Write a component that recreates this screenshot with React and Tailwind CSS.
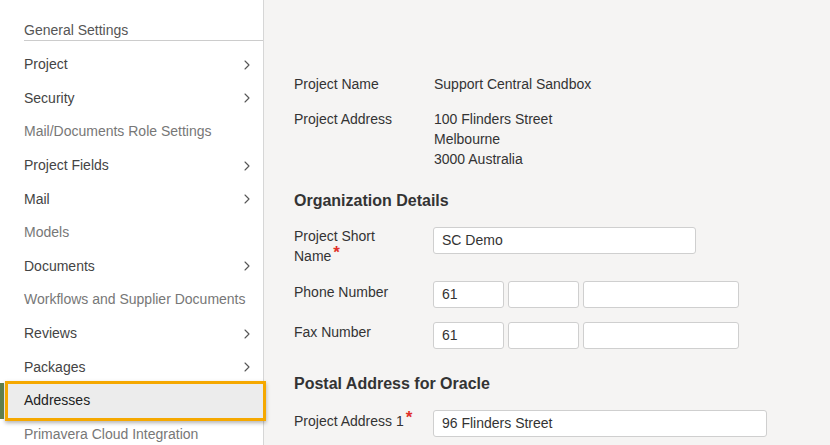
import { ChevronRight } from "lucide-react";

const navItems = [
  { label: "Project", arrow: true },
  { label: "Security", arrow: true },
  { label: "Mail/Documents Role Settings", muted: true },
  { label: "Project Fields", arrow: true },
  { label: "Mail", arrow: true },
  { label: "Models", muted: true },
  { label: "Documents", arrow: true },
  { label: "Workflows and Supplier Documents", muted: true },
  { label: "Reviews", arrow: true },
  { label: "Packages", arrow: true },
  { label: "Addresses", active: true },
  { label: "Primavera Cloud Integration", muted: true },
];

const Input = ({ value = "", className = "" }) => (
  <div className={`h-[27px] bg-white border border-[#cfcfcf] rounded-[3px] px-2 flex items-center text-[14px] text-[#333] ${className}`}>
    {value}
  </div>
);

const Req = () => <span className="text-[#e0302a] text-[17px] font-bold ml-[2px] relative -top-[3px] leading-none">*</span>;

export default function App() {
  return (
    <div className="w-[830px] h-[445px] overflow-hidden flex bg-[#f5f4f3]" style={{ fontFamily: "Arial, 'Liberation Sans', sans-serif" }}>
      <aside className="w-[264px] shrink-0 bg-white border-r border-[#d6d6d6] pt-[21px]">
        <div className="ml-[24px] border-b border-[#cccccc] pb-[1px] text-[14px] text-[#555] leading-[18px]">General Settings</div>
        <div className="pt-[7px]">
          {navItems.map((item) =>
            item.active ? (
              <div key={item.label} className="relative h-[33.6px] flex items-center">
                <div className="absolute left-0 -top-[1px] -bottom-[1px] w-[4px] bg-[#5f7e4c]" />
                <div className="ml-[5px] w-[261px] h-[40px] -my-[3px] shrink-0 bg-[#ececec] border-[3px] border-[#f5a800] shadow-[0_2px_4px_rgba(0,0,0,0.3)] flex items-center pl-[16px] text-[14px] text-[#222]">
                  {item.label}
                </div>
              </div>
            ) : (
              <div key={item.label} className={`h-[33.6px] flex items-center pl-[24px] pr-[8px] text-[14px] ${item.muted ? "text-[#777]" : "text-[#444]"}`}>
                <span className="flex-1 whitespace-nowrap">{item.label}</span>
                {item.arrow && <ChevronRight size={16} strokeWidth={1.6} className="text-[#555]" />}
              </div>
            )
          )}
        </div>
      </aside>
      <main className="flex-1 pl-[30px] pt-[74px] text-[14px] text-[#333]">
        <div className="flex leading-[20px]">
          <div className="w-[140px]">Project Name</div>
          <div>Support Central Sandbox</div>
        </div>
        <div className="flex leading-[20px] mt-[15px]">
          <div className="w-[140px]">Project Address</div>
          <div>
            <div>100 Flinders Street</div>
            <div>Melbourne</div>
            <div>3000 Australia</div>
          </div>
        </div>
        <h2 className="text-[16px] font-bold text-[#333] mt-[22px] leading-[20px]">Organization Details</h2>
        <div className="flex mt-[16px]">
          <div className="w-[139px] leading-[20px] -mt-[1px]">
            Project Short
            <br />
            Name<Req />
          </div>
          <Input value="SC Demo" className="w-[263px]" />
        </div>
        <div className="flex mt-[15px]">
          <div className="w-[139px] leading-[20px] mt-[1px]">Phone Number</div>
          <div className="flex gap-[4px]">
            <Input value="61" className="w-[71px]" />
            <Input className="w-[71px]" />
            <Input className="w-[156px]" />
          </div>
        </div>
        <div className="flex mt-[14px]">
          <div className="w-[139px] leading-[20px]">Fax Number</div>
          <div className="flex gap-[4px]">
            <Input value="61" className="w-[71px]" />
            <Input className="w-[71px]" />
            <Input className="w-[156px]" />
          </div>
        </div>
        <h2 className="text-[16px] font-bold text-[#333] mt-[25px] leading-[20px]">Postal Address for Oracle</h2>
        <div className="flex mt-[16px]">
          <div className="w-[139px] leading-[20px] mt-[1px]">
            Project Address 1<Req />
          </div>
          <Input value="96 Flinders Street" className="w-[334px]" />
        </div>
      </main>
    </div>
  );
}
